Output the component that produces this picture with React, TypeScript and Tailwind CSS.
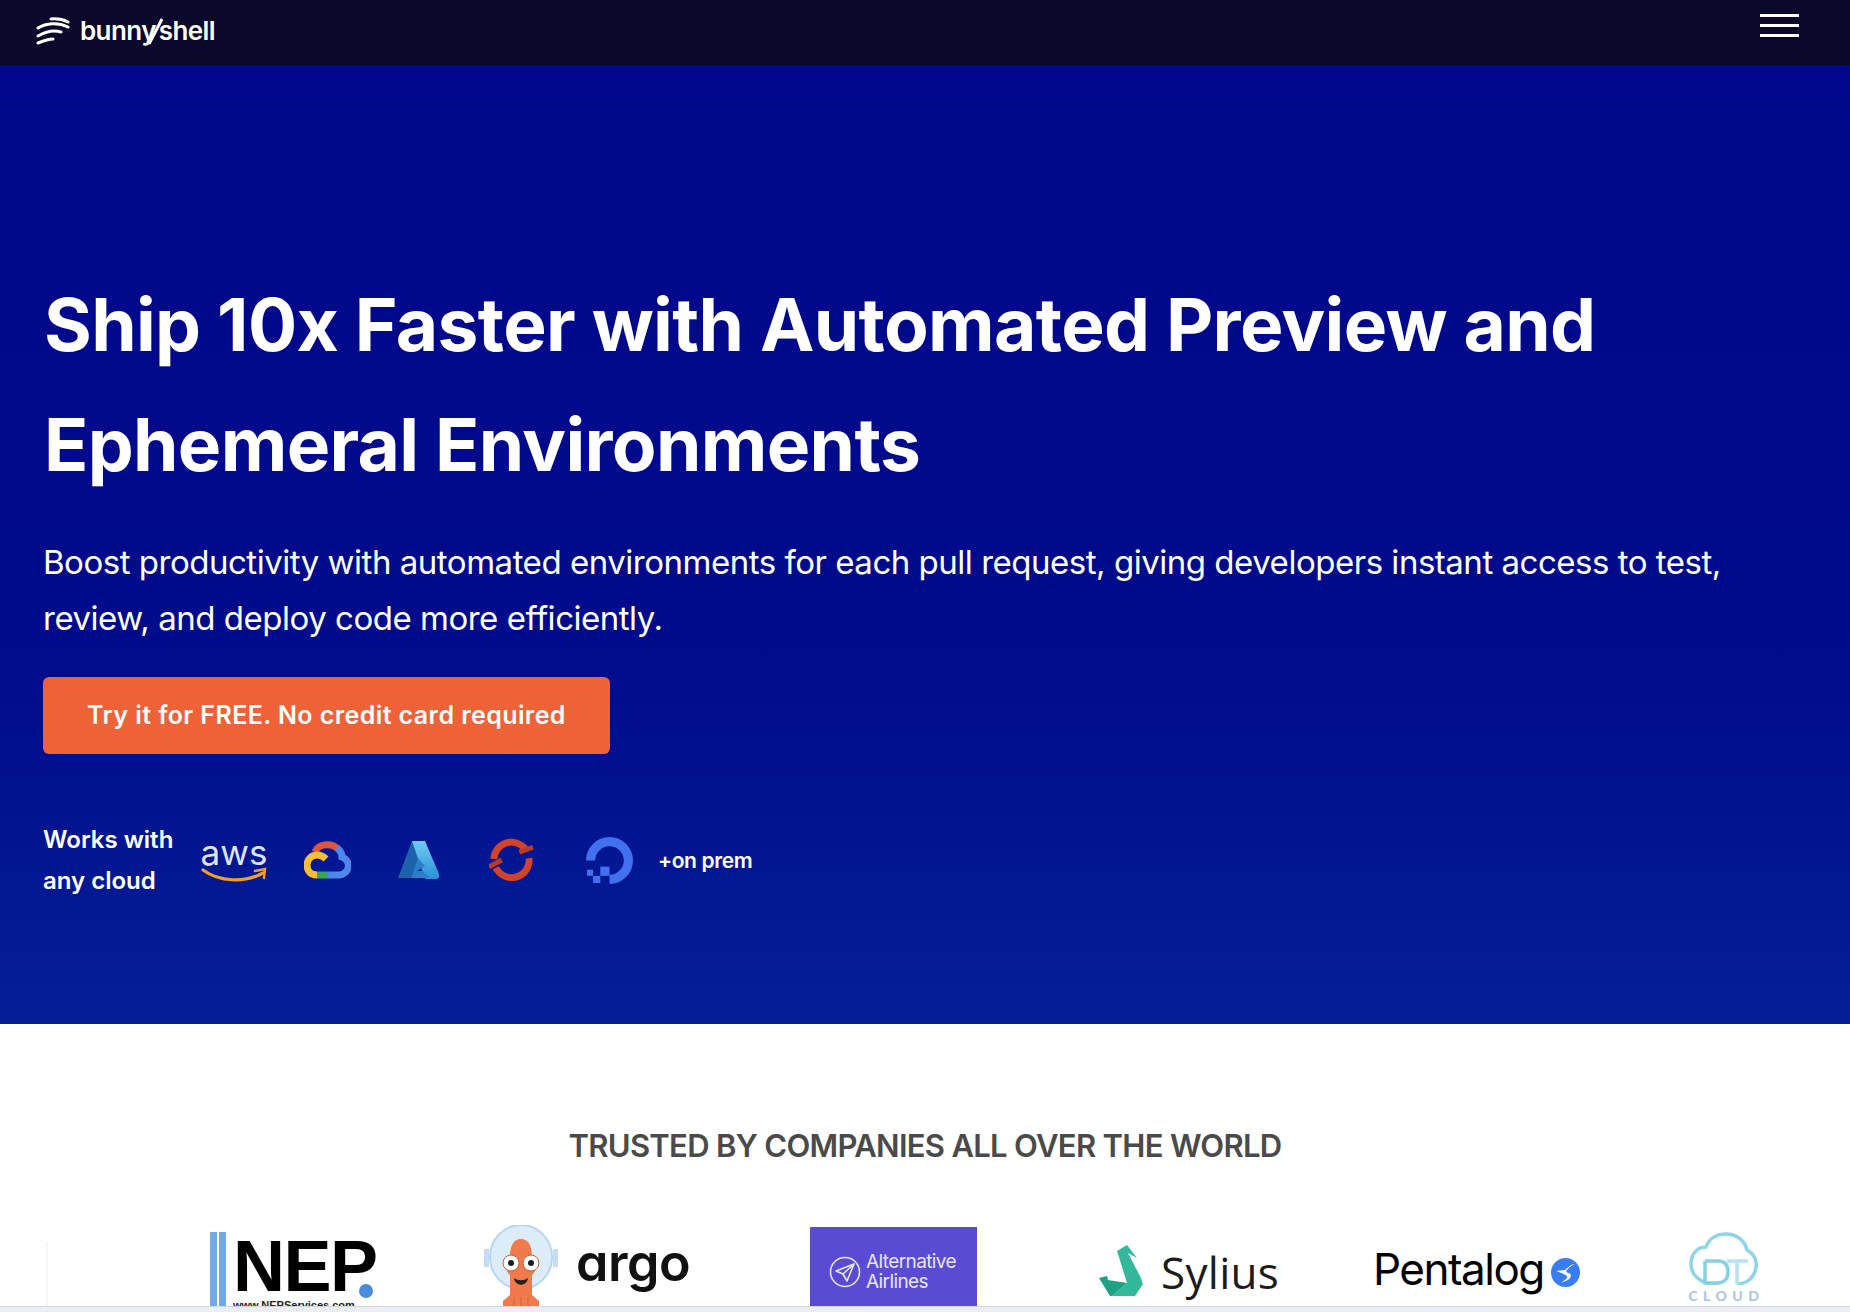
function BunnyMark() {
  return (
    <svg width="34" height="28" viewBox="0 0 34 28" fill="none" stroke="white" strokeWidth="3" strokeLinecap="round">
      <path d="M15 2C21 1.500 27 2.500 32 5" />
      <path d="M2 11C10 6 22 5 32 10" />
      <path d="M2 19C9 15 18 13 25 15" />
      <path d="M2 26C7 24 12 22 17 22" />
    </svg>
  );
}

function Aws() {
  return (
    <div className="flex flex-col items-center w-[66px]">
      <span className="font-['Inter',sans-serif] text-[35px] leading-[30px] font-normal text-[#dfe4f5]">aws</span>
      <svg width="66" height="17" viewBox="0 0 66 17" fill="none">
        <path d="M2 3C18 15 44 16 62 6" stroke="#f19e2b" strokeWidth="3.2" strokeLinecap="round" />
        <path d="M54 4L64 2L63 11" stroke="#f19e2b" strokeWidth="2.4" strokeLinecap="round" />
      </svg>
    </div>
  );
}

function GoogleCloud() {
  return (
    <svg width="47" height="38" viewBox="0 0 47 38" fill="none" strokeWidth="7">
      <path d="M11 11C14 3 27 1 34 8" stroke="#e0533d" />
      <path d="M33 7C37 10 38 13 38 16C44 18 45 24 44 27C43 31 39 34 35 34H24" stroke="#4f86ec" />
      <path d="M24 34H13" stroke="#33a853" />
      <path d="M13 34C6 34 3 29 3 24C3 18 8 14 13 14C17 14 20 16 22 18" stroke="#f6bd3b" />
    </svg>
  );
}

function Azure() {
  return (
    <svg width="41" height="38" viewBox="0 0 41 38">
      <defs>
        <linearGradient id="az" x1="0" y1="0" x2="0" y2="1">
          <stop offset="0" stopColor="#6fcdf2" />
          <stop offset="1" stopColor="#2a8fd8" />
        </linearGradient>
      </defs>
      <path d="M14 0H27L13 37H0Z" fill="#1d62ad" />
      <path d="M14 0H27L41 33C42 36 40 38 38 38H27L14 0Z" fill="url(#az)" />
      <path d="M20 17L13 37H32L24 30H19L27 25Z" fill="#2a7fc9" />
    </svg>
  );
}

function OpenShift() {
  return (
    <svg width="45" height="44" viewBox="0 0 46 44" fill="none" stroke="#d2432c" strokeWidth="7">
      <path d="M5 21A18 18 0 0 1 37 10.500" />
      <path d="M7 30A18 18 0 0 0 41 20" />
      <path d="M0 29L13 22M31 14L45 9" strokeWidth="5" stroke="#b93a26" />
    </svg>
  );
}

function DigitalOcean() {
  return (
    <svg width="47" height="47" viewBox="0 0 46 46" fill="#4271f0">
      <path d="M23 46V37A14 14 0 1 0 9 23H0A23 23 0 1 1 23 46Z" />
      <rect x="14" y="29" width="9" height="9" />
      <rect x="7" y="38" width="7" height="7" />
      <rect x="1" y="32" width="6" height="6" />
    </svg>
  );
}

function Nep() {
  return (
    <div className="flex h-[74px] gap-[5px] overflow-hidden w-[167px] mt-[7px]">
      <div className="flex gap-[2px] shrink-0">
        <div className="w-[7px] h-full bg-[#74a8e4]" />
        <div className="w-[7px] h-full bg-[#74a8e4]" />
      </div>
      <div className="relative pt-[2px]">
        <span className="block font-['Liberation_Sans',sans-serif] font-bold text-[72px] leading-[64px] text-black tracking-[-1.5px] pl-[2px]">NEP</span>
        <span className="absolute left-[128px] top-[52px] w-[14px] h-[14px] rounded-full bg-[#4a8bdb]" />
        <span className="block font-['Liberation_Sans',sans-serif] font-bold text-[11px] leading-[12px] mt-[1px] pl-[2px] text-[#222] whitespace-nowrap">www.NEPServices.com</span>
      </div>
    </div>
  );
}

function Argo() {
  return (
    <div className="flex items-start gap-[18px] h-[81px] w-[206px] overflow-hidden">
      <svg width="74" height="82" viewBox="0 0 74 82" className="shrink-0">
        <ellipse cx="37" cy="32" rx="31" ry="32" fill="#dcecf8" stroke="#b5d6f3" strokeWidth="2" />
        <rect x="0" y="24" width="5" height="18" fill="#c4dcf5" />
        <rect x="69" y="24" width="5" height="18" fill="#c4dcf5" />
        <path d="M37 14C46 14 48 24 48 32C53 38 53 46 48 50V70L55 76V82H19V76L26 70V50C21 46 21 38 26 32C26 24 28 14 37 14Z" fill="#f07a4b" />
        <path d="M30 72V82M37 72V82M44 72V82" stroke="#d4623a" strokeWidth="1" />
        <circle cx="27" cy="38" r="8" fill="white" stroke="#c85f37" />
        <circle cx="47" cy="38" r="8" fill="white" stroke="#c85f37" />
        <circle cx="27" cy="38" r="3" fill="#1d1d1d" />
        <circle cx="47" cy="38" r="3" fill="#1d1d1d" />
        <path d="M30 53C34 56 40 56 44 53C43 62 31 62 30 53Z" fill="#222" />
      </svg>
      <span className="font-['Inter',sans-serif] font-semibold text-[52px] leading-[60px] tracking-[-0.5px] text-[#111] mt-[8px] [font-feature-settings:'cv11']">argo</span>
    </div>
  );
}

function AltAirlines() {
  return (
    <div className="w-[167px] h-[79px] mt-[2px] bg-[#594cd2] flex items-center gap-[5px] pl-[19px] pt-[11px]">
      <svg width="32" height="32" viewBox="0 0 32 32" fill="none" stroke="#e8e6fa" strokeWidth="1.6" className="shrink-0">
        <circle cx="16" cy="16" r="14.500" />
        <path d="M25 8L7 15L14 18L18 25Z" strokeLinejoin="round" />
        <path d="M14 18L25 8" />
      </svg>
      <div className="font-['Inter',sans-serif] text-[19px] leading-[20px] tracking-[-0.6px] text-[#e8e6fa]">
        Alternative
        <br />
        Airlines
      </div>
    </div>
  );
}

function Sylius() {
  return (
    <div className="flex items-start gap-[18px] w-[178px] mt-[20px]">
      <svg width="44" height="52" viewBox="0 0 44 52" className="shrink-0">
        <path d="M28 0L38 13L29 8L41 31L44 39L36 51H13L28 38L18 6Z" fill="#33b99a" />
        <path d="M0 33L8 31L9 35L28 38L13 51H11Z" fill="#1fa283" />
      </svg>
      <span className="font-['Open_Sans',sans-serif] text-[44px] leading-[50px] tracking-[0.3px] text-[#1c1c1c] mt-[2px]">Sylius</span>
    </div>
  );
}

function Pentalog() {
  return (
    <div className="flex items-start gap-[7px] mt-[16px]">
      <span className="font-['Inter',sans-serif] text-[44px] leading-[56px] tracking-[-1.5px] text-black">Pentalog</span>
      <svg width="29" height="29" viewBox="0 0 29 29" className="mt-[17px]">
        <circle cx="14.500" cy="14.500" r="14.500" fill="#397ef0" />
        <path d="M5 13L14 12C18 8 21 6 24 6C19 8 16 11 15 14C17 15 20 15 20 18C19 22 14 23 10 25C14 22 17 20 16 18C14 16 10 15 5 13Z" fill="white" />
      </svg>
    </div>
  );
}

function DtCloud() {
  return (
    <div className="flex flex-col items-center w-[70px] mt-[7px]">
      <svg width="70" height="53" viewBox="0 0 70 53" fill="none" strokeWidth="3.500">
        <path d="M28 52C10 52 1 42 2 30C3 20 10 15 17 15C20 6 28 2 37 2C48 2 56 9 58 18C65 22 68 28 67 35C66 45 58 52 48 52" stroke="#8fd5ea" />
        <path d="M16 29H29C36 29 39 33 39 40C39 47 35 51 28 51H16V29" stroke="#86d0e8" />
        <path d="M38 29H59M48 29V52" stroke="#b5e2f1" />
      </svg>
      <span className="font-['Lato',sans-serif] font-bold text-[14px] leading-[16px] tracking-[5.5px] mr-[-5px] mt-[3px] text-[#a5c3e4]">CLOUD</span>
    </div>
  );
}

export default function App() {
  return (
    <div className="h-[1312px] overflow-hidden bg-white font-['Inter',sans-serif]">
      <header className="h-[65px] bg-[#0b082b] flex items-center justify-between pl-[36px] pr-[51px]">
        <div className="flex items-center gap-[10px] -mt-[4px]">
          <BunnyMark />
          <div className="flex items-baseline font-semibold text-[26px] leading-[32px] tracking-[-0.6px] text-white">
            <span>bunny</span>
            <svg width="3" height="26" viewBox="0 0 3 26" className="overflow-visible self-center mt-[5px]">
              <path d="M6 -1L-7 24" stroke="white" strokeWidth="3" />
            </svg>
            <span>shell</span>
          </div>
        </div>
        <div className="flex flex-col gap-[7px] -mt-[14px]">
          <div className="w-[39px] h-[3px] bg-white" />
          <div className="w-[39px] h-[3px] bg-white" />
          <div className="w-[39px] h-[3px] bg-white" />
        </div>
      </header>

      <section className="h-[959px] bg-gradient-to-b from-[#00078a] via-[#000c8c] via-65% to-[#051e96] px-[43px] pt-[200px]">
        <h1 className="ml-[1px] font-bold text-[73px] leading-[120px] tracking-[-0.65px] text-white">
          Ship 10x Faster with Automated Preview and
          <br />
          Ephemeral Environments
        </h1>
        <p className="mt-[29px] text-[33px] leading-[56px] tracking-[-0.48px] text-white">
          Boost productivity with automated environments for each pull request, giving developers instant access to test,
          <br />
          review, and deploy code more efficiently.
        </p>
        <button className="mt-[31px] w-[567px] h-[77px] rounded-[6px] bg-[#ee6237] font-semibold text-[25px] tracking-[0.42px] text-white">
          Try it for FREE. No credit card required
        </button>
        <div className="mt-[65px] flex items-center">
          <p className="font-semibold text-[24px] leading-[41px] text-white w-[158px]">
            Works with
            <br />
            any cloud
          </p>
          <div className="flex items-center">
            <Aws />
            <div className="ml-[37px]"><GoogleCloud /></div>
            <div className="ml-[47px]"><Azure /></div>
            <div className="ml-[50px]"><OpenShift /></div>
            <div className="ml-[52px]"><DigitalOcean /></div>
          </div>
          <span className="ml-[25px] mt-[2px] font-semibold text-[21px] tracking-[-0.4px] text-white">+on prem</span>
        </div>
      </section>

      <section className="h-[282px] bg-white">
        <h2 className="pt-[102px] text-center font-semibold text-[31px] leading-[40px] tracking-[-0.7px] text-[#4a4a4a]">
          TRUSTED BY COMPANIES ALL OVER THE WORLD
        </h2>
        <div className="mt-[59px] h-[81px] flex items-start pl-[46px] overflow-hidden">
          <div className="w-[2px] h-[64px] mt-[17px] bg-[#fbf6f6]" />
          <div className="ml-[162px]"><Nep /></div>
          <div className="ml-[107px]"><Argo /></div>
          <div className="ml-[120px]"><AltAirlines /></div>
          <div className="ml-[122px]"><Sylius /></div>
          <div className="ml-[96px]"><Pentalog /></div>
          <div className="ml-[109px]"><DtCloud /></div>
        </div>
      </section>
      <div className="h-[6px] bg-[#eceef5] border-t border-[#d5d6da]" />
    </div>
  );
}
